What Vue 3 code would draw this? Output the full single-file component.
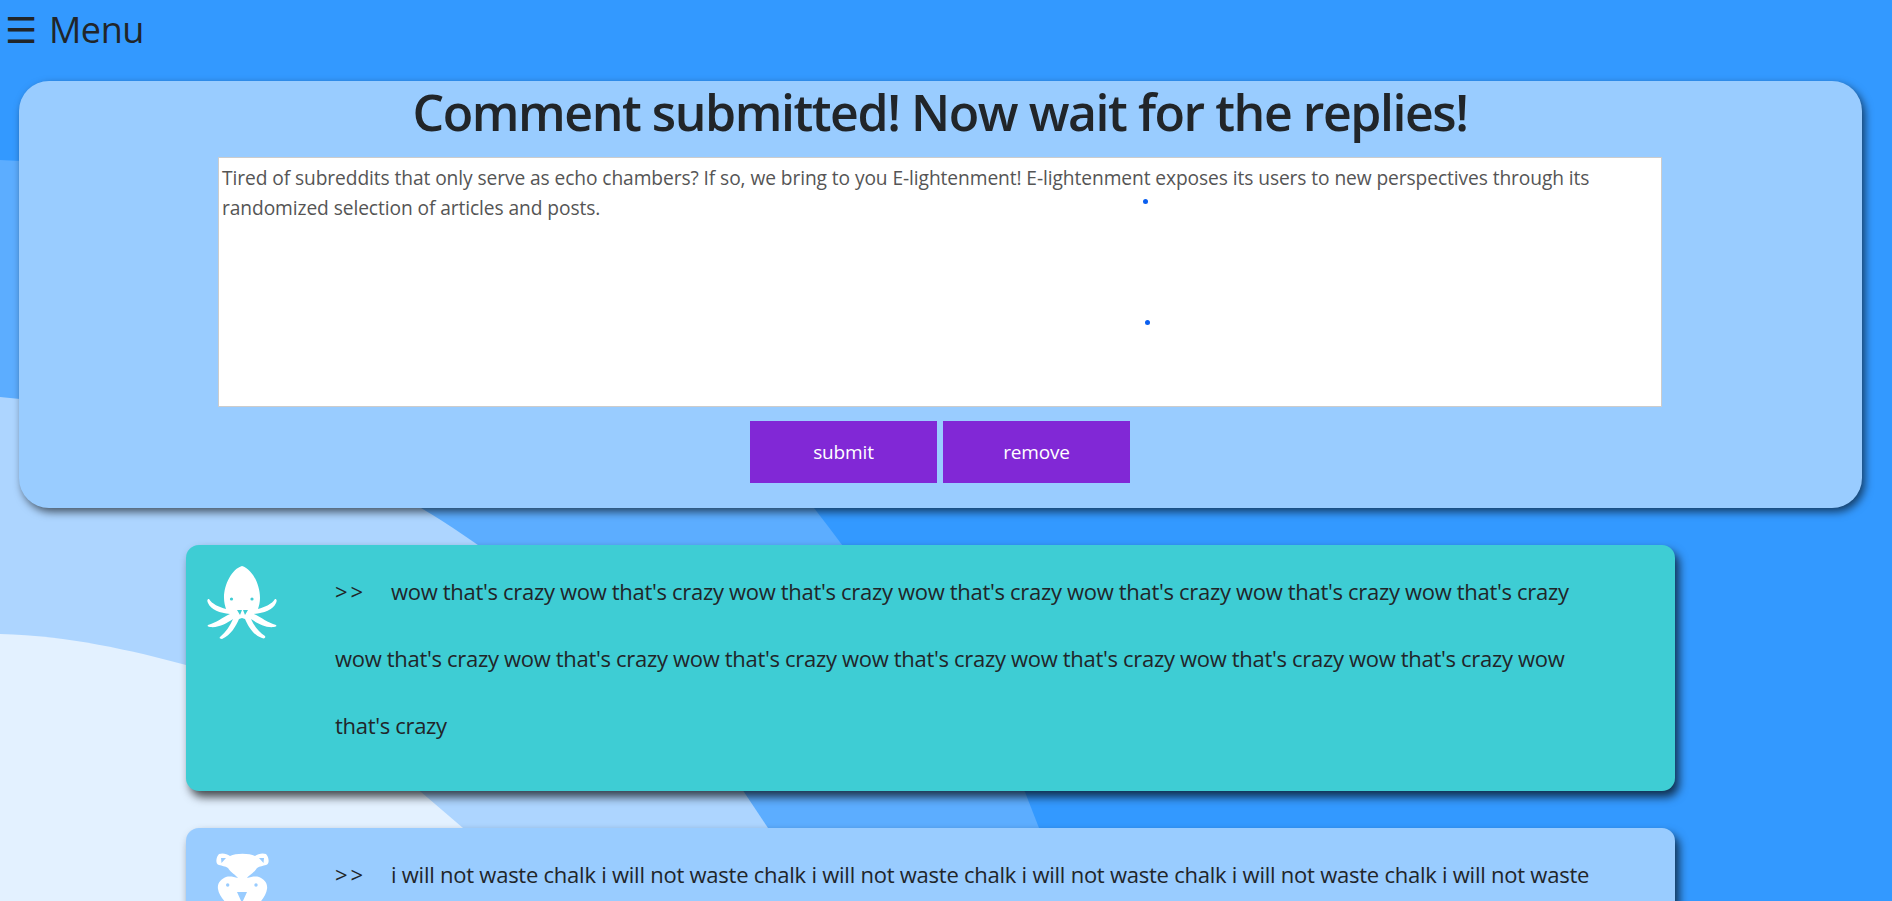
<script setup>
const wow = Array(15).fill("wow that's crazy").join(' ')
const chalk = Array(6).fill('i will not waste chalk').join(' ') + ' i will not waste'
</script>

<template>
  <div class="page">
    <svg class="backdrop" viewBox="0 0 1892 901" preserveAspectRatio="none" aria-hidden="true">
      <path class="b1" d="M0 160C300 170 640 300 814 508C900 620 980 730 1025 792L1039 828L1065 901H0Z" />
      <path class="b2" d="M0 397C150 410 300 450 421 508C521 567 684 702 744 792L768 828L815 901H0Z" />
      <path class="b3" d="M0 634C70 636 130 650 186 665C270 700 350 740 421 792L463 828L540 901H0Z" />
    </svg>
    <div class="content">
      <div class="menu"><span class="burger">☰</span>Menu</div>
      <section class="card">
        <h1>Comment submitted! Now wait for the replies!</h1>
        <div class="editor">Tired of subreddits that only serve as echo chambers? If so, we bring to you E-lightenment! E-lightenment exposes its users to new perspectives through its randomized selection of articles and posts.<i class="dot one"></i><i class="dot two"></i></div>
        <div class="buttons">
          <button type="button">submit</button>
          <button type="button">remove</button>
        </div>
      </section>
      <article class="comment teal">
        <div class="side">
          <svg class="octopus" viewBox="0 0 70 73" aria-hidden="true">
            <path fill="#fff" d="M35 0C45 3 53 18 53 32C53 36 52 40 51 43C58 41 65 38 68 33C70 33 70 35 69 37C66 44 57 47 47 48C54 51 61 57 69 59C70 60 69 61 67 61C58 62 50 57 44 53C47 60 52 66 58 70C59 72 57 73 55 72C46 69 41 60 38 53L35 52L32 53C29 60 24 69 15 73C13 73 12 72 13 71C19 66 23 60 26 53C20 57 12 62 3 61C1 61 0 60 1 59C9 57 16 51 23 48C13 47 4 44 1 37C0 35 0 33 2 33C5 38 12 41 19 43C18 40 17 36 17 32C17 18 25 3 35 0Z" />
            <circle cx="24.5" cy="33" r="1.6" fill="#3ecdd4" />
            <circle cx="45" cy="33" r="1.6" fill="#3ecdd4" />
            <path fill="#3ecdd4" d="M30 44H35L33 49ZM36 44H41L38 49Z" />
          </svg>
        </div>
        <p class="text"><span class="arrows">&gt;&gt;</span>{{ wow }}</p>
      </article>
      <article class="comment sky">
        <div class="side">
          <svg class="bear" viewBox="0 0 53 60" aria-hidden="true">
            <path fill="#fff" d="M3 1C7 -0.5 11 1 14 3C20 0 33 0 39 3C42 1 46 -0.5 50 1C53 4 54 11 50 12C47 13 44 13 41 15C38 20 33 22 31 25C35 24 39 23 43 24C48 26 52 30 51 36C50 44 42 52 34 60H20C12 52 3 44 2 36C1 30 5 26 10 24C14 23 18 24 22 25C20 22 15 20 12 15C9 13 6 13 3 12C-1 11 0 4 3 1Z" />
            <path fill="#99ccff" d="M5 5L10 5L5.500 10ZM48 5L43 5L47.500 10ZM21 39H31L26 50Z" />
            <circle cx="11.700" cy="32" r="1.700" fill="#99ccff" />
            <circle cx="40" cy="32" r="1.700" fill="#99ccff" />
          </svg>
        </div>
        <p class="text"><span class="arrows">&gt;&gt;</span>{{ chalk }}</p>
      </article>
    </div>
  </div>
</template>

<style>
html, body { margin: 0; height: 100%; overflow: hidden; }
</style>

<style scoped>
.page {
  position: relative;
  height: 901px;
  overflow: hidden;
  background: #3399ff;
  color: #212529;
  font-family: "Open Sans", "Noto Sans", sans-serif;
}
.backdrop { position: absolute; inset: 0; width: 100%; height: 100%; }
.b1 { fill: #5cadff; }
.b2 { fill: #add5ff; }
.b3 { fill: #e3f1ff; }
.content { position: relative; display: flex; flex-direction: column; }
.menu { height: 81px; font-size: 36px; font-weight: 400; line-height: 60px; padding-left: 5px; box-sizing: border-box; letter-spacing: -0.4px; }
.burger { font-family: "DejaVu Sans", sans-serif; margin-right: 12px; }
.card {
  width: 1843px;
  height: 427px;
  margin-left: 19px;
  box-sizing: border-box;
  padding-right: 1px;
  background: #99ccff;
  border-radius: 30px;
  box-shadow: 3px 4px 8px rgba(0, 0, 0, 0.6);
  display: flex;
  flex-direction: column;
  align-items: center;
}
h1 { margin: 0; font-size: 50px; line-height: 62px; font-weight: 600; letter-spacing: -1.45px; height: 76px; }
.editor {
  position: relative;
  width: 1444px;
  height: 250px;
  box-sizing: border-box;
  background: #fff;
  border: 1px solid #ccc;
  padding: 5px 3px 3px;
  font-size: 19.2px;
  line-height: 30px;
  color: #555;
  letter-spacing: -0.09px;
}
.dot { position: absolute; width: 5px; height: 5px; border-radius: 50%; background: #0a5ff0; }
.one { left: 924px; top: 41px; }
.two { left: 926px; top: 162px; }
.buttons { display: flex; gap: 6px; margin-top: 14px; }
button {
  width: 187px;
  height: 62px;
  border: none;
  padding: 0;
  background: #8128d6;
  color: #fff;
  font: inherit;
  font-size: 19px;
  letter-spacing: -0.15px;
}
.comment {
  width: 1489px;
  margin-left: 186px;
  margin-top: 37px;
  height: 246px;
  box-sizing: border-box;
  display: flex;
  border-radius: 13px;
  box-shadow: 4px 6px 10px rgba(0, 0, 0, 0.7);
}
.teal { background: #3ecdd4; }
.sky { background: #99ccff; }
.side { width: 149px; flex: none; }
.octopus { display: block; width: 70px; height: 73px; margin: 21px 0 0 21px; }
.bear { display: block; width: 53px; height: 60px; margin: 25px 0 0 30px; }
.text {
  margin: 13px 0 0;
  width: 1265px;
  font-size: 22px;
  line-height: 67px;
}
.teal .text { letter-spacing: -0.31px; }
.sky .text { letter-spacing: -0.24px; }
.arrows { display: inline-block; width: 56px; letter-spacing: 3px; }
</style>
